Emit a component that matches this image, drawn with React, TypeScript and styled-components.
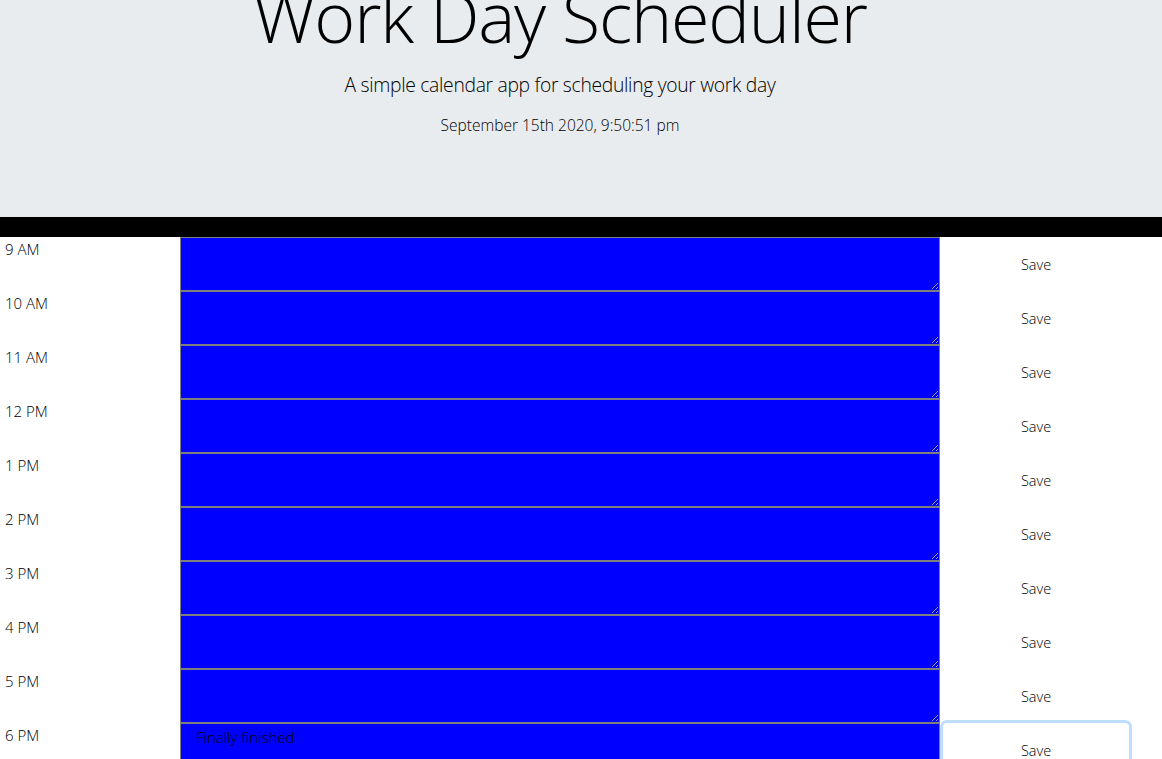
import React from "react";
import styled, { createGlobalStyle } from "styled-components";

const Global = createGlobalStyle`
  html, body { margin: 0; padding: 0; background: #fff; overflow: hidden; }
  body { font-family: "Open Sans", "Noto Sans", sans-serif; color: #000; }
`;

const Jumbotron = styled.header`
  background: #e9ecef;
  border-bottom: 20px solid #000;
  margin-top: -48px;
  height: 285px;
  box-sizing: border-box;
  display: flex;
  flex-direction: column;
  align-items: center;
  padding: 21px 42px 0 0;
`;

const Title = styled.h1`
  margin: 0;
  font-family: "Open Sans", sans-serif;
  font-weight: 300;
  font-size: 70px;
  line-height: 86px;
  letter-spacing: -1.2px;
`;

const Lead = styled.p`
  margin: 11px 0 0;
  font-weight: 300;
  font-size: 19.3px;
  line-height: 30px;
  letter-spacing: -0.3px;
`;

const DateLine = styled.p`
  margin: 13px 0 0;
  font-weight: 300;
  font-size: 15.5px;
  line-height: 24px;
  letter-spacing: 0;
`;

const Schedule = styled.main`
  display: flex;
  flex-direction: column;
`;

const Row = styled.div`
  display: flex;
  height: 54px;
`;

const Hour = styled.div`
  width: 180px;
  box-sizing: border-box;
  padding-left: 5px;
  font-weight: 300;
  font-size: 15px;
  line-height: 24px;
  color: #000;
`;

const Note = styled.textarea`
  width: 760px;
  height: 54px;
  box-sizing: border-box;
  margin: 0;
  border: 1px solid #7f7f7f;
  background: #0000ff;
  color: #000;
  font-family: "Open Sans", sans-serif;
  font-weight: 300;
  font-size: 15px;
  padding: 2px 15px;
  line-height: 22px;
  outline: none;
`;

const SaveButton = styled.button<{ $focused?: boolean }>`
  width: 186px;
  height: 54px;
  margin-left: 3px;
  border: none;
  border-radius: 4px;
  background: #fff;
  font-family: "Open Sans", sans-serif;
  font-weight: 300;
  font-size: 14.5px;
  color: #000;
  cursor: pointer;
  box-shadow: ${(p) => (p.$focused ? "0 0 0 3px rgba(0,123,255,0.25)" : "none")};
  position: relative;
`;

const hours = ["9 AM", "10 AM", "11 AM", "12 PM", "1 PM", "2 PM", "3 PM", "4 PM", "5 PM", "6 PM"];

export default function App() {
  return (
    <>
      <Global />
      <Jumbotron>
        <Title>Work Day Scheduler</Title>
        <Lead>A simple calendar app for scheduling your work day</Lead>
        <DateLine>September 15th 2020, 9:50:51 pm</DateLine>
      </Jumbotron>
      <Schedule>
        {hours.map((h) => (
          <Row key={h}>
            <Hour>{h}</Hour>
            <Note defaultValue={h === "6 PM" ? "Finally finished" : ""} />
            <SaveButton $focused={h === "6 PM"}>Save</SaveButton>
          </Row>
        ))}
      </Schedule>
    </>
  );
}
